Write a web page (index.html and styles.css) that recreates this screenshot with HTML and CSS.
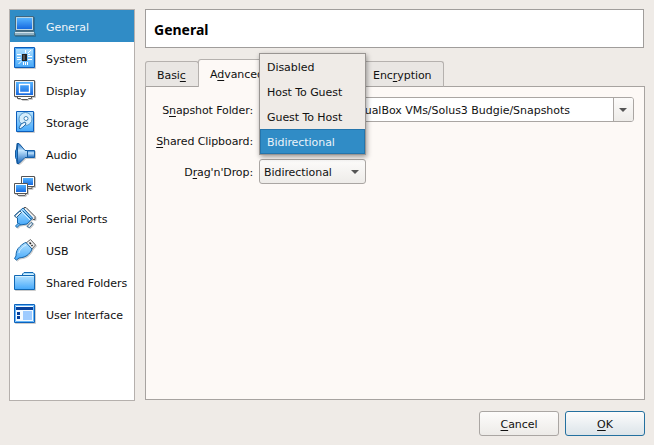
FILE: index.html
```html
<!DOCTYPE html>
<html lang="en">
<head>
<meta charset="utf-8">
<title>Settings</title>
<link rel="stylesheet" href="styles.css">
</head>
<body>
<svg class="defs" width="0" height="0" aria-hidden="true">
  <defs>
    <linearGradient id="screen" x1="0" y1="0" x2="0" y2="1"><stop offset="0" stop-color="#55b3ff"/><stop offset="1" stop-color="#1669e0"/></linearGradient>
    <linearGradient id="sky" x1="0" y1="0" x2="0" y2="1"><stop offset="0" stop-color="#b4e2ff"/><stop offset="1" stop-color="#45a8fa"/></linearGradient>
    <linearGradient id="cone" x1="0" y1="0" x2="0" y2="1"><stop offset="0" stop-color="#1b6fc9"/><stop offset=".35" stop-color="#c3e6ff"/><stop offset="1" stop-color="#1766bd"/></linearGradient>
  </defs>
</svg>
<div class="dialog">
  <nav class="sidebar">
    <div class="item selected">
      <svg class="icon" viewBox="0 0 24 24"><path d="M2.500 2.500h18v14h-18z" fill="#b9d6e6" stroke="#40677f"/><path d="M4 4h15v11H4z" fill="url(#screen)"/><path d="M2.500 17.500h18l1 2v2h-20v-2z" fill="#8eb1c4" stroke="#4a7184"/><path d="M2 18.500h19" stroke="#d2e4ed"/></svg>
      <span>General</span>
    </div>
    <div class="item">
      <svg class="icon" viewBox="0 0 24 24"><path d="M1.500 1.500h20v20h-20z" fill="url(#sky)" stroke="#0b5dbb"/><path d="M2.500 2.500h18v18h-18z" fill="none" stroke="#4aa5f3"/><path d="M9 8h5v7H9z" fill="#222"/><path d="M10 9h2v5h-2z" fill="#555"/><path d="M4 8.500h4M4 11.500h3.500M4 13.500h4M15 8.500h2M15 10.500h4M15 13.500h4M12.500 4v3M18 4l-3 3M5.500 18l3-3M10.500 16v3M12.500 16v3M14.500 16v3" stroke="#fff" fill="none"/></svg>
      <span>System</span>
    </div>
    <div class="item">
      <svg class="icon" viewBox="0 0 24 24"><path d="M4.500 19v1.500h3l1 1h6l1-1h3V19" fill="#fff" stroke="#555"/><path d="M1.500 2.500h20v16h-20z" fill="#f4f4f4" stroke="#555"/><path d="M3 4h17v13H3z" fill="url(#screen)"/><path d="M6.500 6.500h10v8h-10z" fill="none" stroke="#fff" stroke-width="1.300"/></svg>
      <span>Display</span>
    </div>
    <div class="item">
      <svg class="icon" viewBox="0 0 24 24"><path d="M3.500 1.500h17v20h-17z" fill="url(#sky)" stroke="#0b5dbb"/><circle cx="12.500" cy="9" r="6.500" fill="#d5edfc" stroke="#5898c9"/><circle cx="13" cy="8.500" r="2" fill="#fff" stroke="#4588ba"/><path d="M6 18l2-4 4-2 1 2-3 3-3 2z" fill="#eaf6ff" stroke="#246baa"/></svg>
      <span>Storage</span>
    </div>
    <div class="item">
      <svg class="icon" viewBox="0 0 24 24"><path d="M14 8.500h7.500v7H14z" fill="url(#cone)" stroke="#1761a8"/><path d="M4 1.500h2L12 8.500h2.500v7H12l-6 6H4z" fill="url(#cone)" stroke="#155b9f"/><path d="M4.500 1.500v20l-1-4-1-2V9l1-2z" fill="#328bdb" stroke="#155b9f"/></svg>
      <span>Audio</span>
    </div>
    <div class="item">
      <svg class="icon" viewBox="0 0 24 24"><path d="M12 12.500h7v2h-7z" fill="#ddd" stroke="#666"/><path d="M8.500 2.500h13v10h-13z" fill="#fff" stroke="#555"/><path d="M10 4h10v7H10z" fill="url(#screen)"/><path d="M4 19.500l1 2h7l1-2" fill="#eee" stroke="#666"/><path d="M1.500 9.500h13v10h-13z" fill="#fff" stroke="#555"/><path d="M3 11h10v7H3z" fill="url(#screen)"/></svg>
      <span>Network</span>
    </div>
    <div class="item">
      <svg class="icon" viewBox="0 0 24 24"><path d="M11 1.500h2l9 9v3h-2l-9-10z" fill="#eee" stroke="#555"/><path d="M1.500 9.500L10 2l9.500 10-5.500 6-7 1-2.500-2V12z" fill="url(#sky)" stroke="#1564a7"/><path d="M9.500 4.500l9 9" stroke="#17639e"/><path d="M8 5l9 9" stroke="#d9f0ff"/><path d="M1.500 10l2 1.500 5-5-1.500-1.500zM14 20.500l4-4 2 1-3.500 4z" fill="#e8f4fc" stroke="#336187"/><path d="M5.500 17l1.500 1.500-3 3-1.500-1.500z" fill="#68baf7" stroke="#1564a7"/></svg>
      <span>Serial Ports</span>
    </div>
    <div class="item">
      <svg class="icon" viewBox="0 0 24 24"><path d="M13 5l4.500-3.500 5 5.500-4 4.500z" fill="#f2f2f2" stroke="#666"/><path d="M16.500 4.500l1.500 1.500M18.500 7l1 1" stroke="#222" stroke-width="1.500"/><path d="M3 18c0-4 1-7 4-9.500 2-2 4-3.500 6-4L19 11c-1 3-3 5-5 6.500-3 2-5 2-8 2.500l-2.500 2-2-1.500z" fill="url(#sky)" stroke="#1564a7"/><path d="M6 15c0-3 4-6.500 7-8" fill="none" stroke="#d9f0ff"/></svg>
      <span>USB</span>
    </div>
    <div class="item">
      <svg class="icon" viewBox="0 0 24 24"><path d="M9.500 5.500V4L11 2.500h9L21.500 4v3h-12z" fill="#a5dcfa" stroke="#1168b4"/><path d="M1.500 5.500h20v14h-20z" fill="url(#sky)" stroke="#1168b4"/><path d="M10.500 4.500h10M2.500 6.500h18" stroke="#d4f0ff"/></svg>
      <span>Shared Folders</span>
    </div>
    <div class="item">
      <svg class="icon" viewBox="0 0 24 24"><path d="M1.500 2.500h20v18h-20z" fill="#f4faff" stroke="#0b62bd"/><path d="M2.500 3.500h18v16h-18z" fill="none" stroke="#64b5f8"/><path d="M3 5h17v3H3zM4 10h3v3H4zM4 14h3v3H4z" fill="#07409b"/><path d="M10 9h9v9h-9z" fill="#9dcbff"/></svg>
      <span>User Interface</span>
    </div>
  </nav>
  <main class="content">
    <h1 class="title">General</h1>
    <div class="tabs">
      <div class="tab basic">Basi<u>c</u></div>
      <div class="tab active">A<u>d</u>vanced</div>
      <div class="tab encryption">Enc<u>r</u>yption</div>
    </div>
    <section class="pane">
      <div class="row">
        <label>S<u>n</u>apshot Folder:</label>
        <div class="combo path"><span>VirtualBox VMs/Solus3 Budgie/Snapshots</span><div class="drop"><i class="arrow"></i></div></div>
      </div>
      <div class="row">
        <label><u>S</u>hared Clipboard:</label>
        <div class="popup-anchor">
          <div class="menu">
            <div class="option">Disabled</div>
            <div class="option">Host To Guest</div>
            <div class="option">Guest To Host</div>
            <div class="option current">Bidirectional</div>
          </div>
        </div>
      </div>
      <div class="row">
        <label>D<u>r</u>ag'n'Drop:</label>
        <div class="combo"><span>Bidirectional</span><i class="arrow"></i></div>
      </div>
    </section>
    <footer class="buttons">
      <button class="button"><u>C</u>ancel</button>
      <button class="button default"><u>O</u>K</button>
    </footer>
  </main>
</div>
</body>
</html>
```
FILE: styles.css
```css
* { box-sizing: border-box; }
body {
  margin: 0;
  background: #efebe7;
  color: #111;
  font: 11px/16px "DejaVu Sans", sans-serif;
  letter-spacing: -0.06px;
  overflow: hidden;
}
.defs { display: block; }
u { text-decoration: underline; text-underline-offset: 2px; text-decoration-thickness: 1px; text-decoration-skip-ink: none; }
.dialog { display: flex; gap: 10px; height: 445px; padding: 9px; }
.sidebar { width: 126px; height: 392px; border: 1px solid #b5b0ad; background: #fff; }
.item { display: flex; align-items: center; gap: 9px; height: 32px; padding-left: 3px; white-space: nowrap; }
.item span { padding-top: 3px; }
.item.selected { background: #308cc6; color: #eff5fa; }
.icon { width: 24px; height: 24px; flex: none; filter: drop-shadow(1px 1px 0 rgb(0 0 0 / 20%)); }
.content { width: 500px; display: flex; flex-direction: column; }
.title { width: 499px; height: 39px; margin: 0 0 11px; padding: 11px 8px; border: 1px solid #a09d9b; background: #fff; color: #000; font: bold 14px/18px "Noto Sans", sans-serif; letter-spacing: 0; }
.tabs { display: flex; align-items: flex-end; height: 28px; z-index: 1; }
.tab { height: 26px; padding: 6px 11px 0; border: 1px solid #b5b1ae; border-bottom-color: #a7a3a0; border-radius: 3px 3px 0 0; background: #e9e6e3; white-space: nowrap; }
.tab.basic { width: 54px; }
.tab.active { width: 108px; height: 28px; margin-left: -1px; padding-top: 7px; background: #fdf9f6; border-bottom: 0; }
.tab.encryption { width: 83px; margin-left: 55px; }
.pane { height: 314px; margin-top: -1px; padding: 10px; border: 1px solid #a7a3a0; background: #fdf9f6; display: flex; flex-direction: column; gap: 5px; }
.row { display: grid; grid-template-columns: 97px 1fr; column-gap: 6px; height: 26px; align-items: start; }
.row label { justify-self: end; padding-top: 6px; white-space: nowrap; letter-spacing: -0.1px; }
.combo { display: flex; align-items: center; justify-content: space-between; width: 107px; height: 25px; padding: 0 6px 0 4px; border: 1px solid #aaa6a3; border-radius: 3px; background: linear-gradient(#fcfbfa, #eeece9); }
.combo span { padding-top: 2px; }
.combo.path { width: 375px; padding: 0; background: #fff; }
.combo.path span { flex: 1; text-align: right; padding-right: 43px; white-space: nowrap; letter-spacing: -0.03px; }
.drop { display: flex; align-items: center; justify-content: center; width: 20px; padding-right: 1px; height: 23px; border-left: 1px solid #aaa6a3; border-radius: 0 2px 2px 0; background: linear-gradient(#fcfbfa, #eeece9); }
.arrow { border: 4px solid transparent; border-top-color: #555; border-bottom: 0; }
.popup-anchor { position: relative; height: 26px; }
.menu { position: absolute; left: 0; top: -75px; width: 107px; height: 102px; border: 1px solid #999592; background: #efebe7; box-shadow: 1px 2px 5px rgb(0 0 0 / 38%); z-index: 3; }
.option { height: 25px; padding: 6px 7px 0; }
.option.current { background: #308cc6; color: #eaf3fa; box-shadow: inset 0 0 0 1px #2475ac; }
.buttons { display: flex; justify-content: flex-end; gap: 6px; margin-top: 11px; }
.button { width: 80px; height: 25px; padding: 2px 0 0; border: 1px solid #aaa6a3; border-radius: 3px; background: linear-gradient(#fdfcfb, #edebe8); color: #111; font: inherit; letter-spacing: inherit; }
.button.default { border-color: #24709f; background: linear-gradient(#fcfcfc, #dce4e9); }
```
